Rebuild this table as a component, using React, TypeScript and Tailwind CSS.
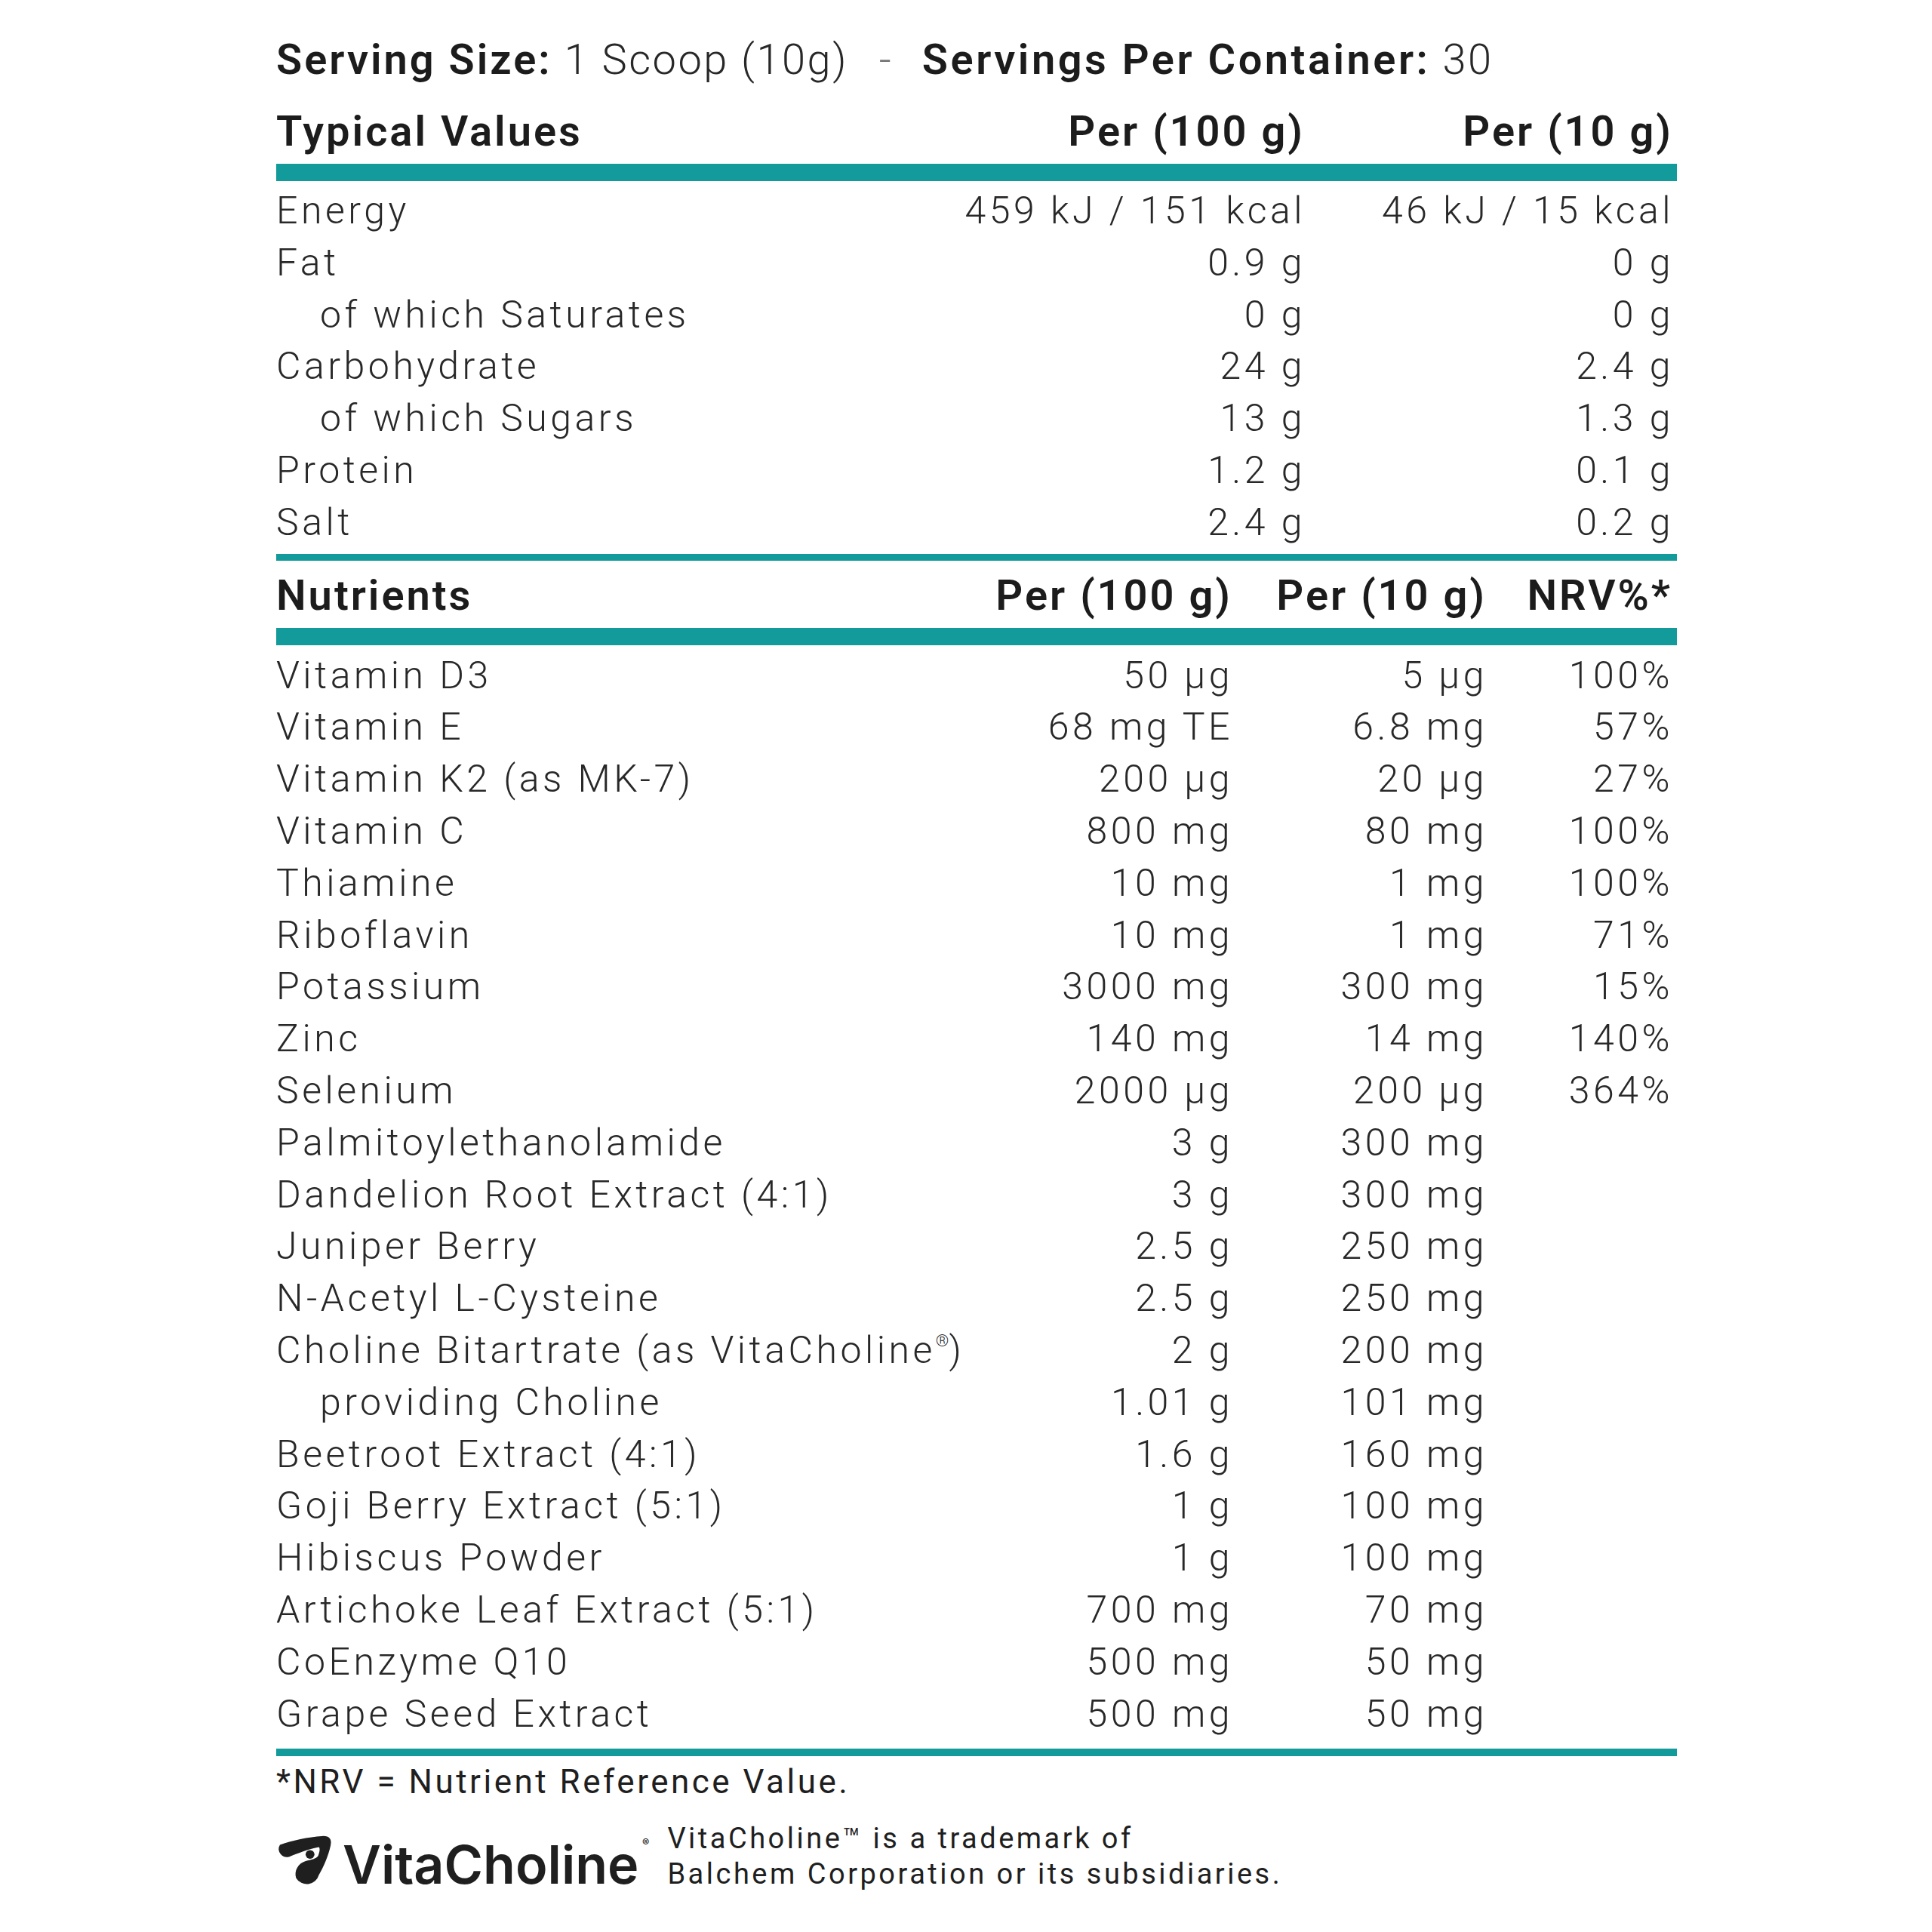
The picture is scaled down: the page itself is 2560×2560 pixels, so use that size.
import React from "react";

type Row = { name: string; a: string; b: string; c?: string; indent?: boolean };

const typical: Row[] = [
  { name: "Energy", a: "459 kJ / 151 kcal", b: "46 kJ / 15 kcal" },
  { name: "Fat", a: "0.9 g", b: "0 g" },
  { name: "of which Saturates", a: "0 g", b: "0 g", indent: true },
  { name: "Carbohydrate", a: "24 g", b: "2.4 g" },
  { name: "of which Sugars", a: "13 g", b: "1.3 g", indent: true },
  { name: "Protein", a: "1.2 g", b: "0.1 g" },
  { name: "Salt", a: "2.4 g", b: "0.2 g" },
];

const nutrients: Row[] = [
  { name: "Vitamin D3", a: "50 µg", b: "5 µg", c: "100%" },
  { name: "Vitamin E", a: "68 mg TE", b: "6.8 mg", c: "57%" },
  { name: "Vitamin K2 (as MK-7)", a: "200 µg", b: "20 µg", c: "27%" },
  { name: "Vitamin C", a: "800 mg", b: "80 mg", c: "100%" },
  { name: "Thiamine", a: "10 mg", b: "1 mg", c: "100%" },
  { name: "Riboflavin", a: "10 mg", b: "1 mg", c: "71%" },
  { name: "Potassium", a: "3000 mg", b: "300 mg", c: "15%" },
  { name: "Zinc", a: "140 mg", b: "14 mg", c: "140%" },
  { name: "Selenium", a: "2000 µg", b: "200 µg", c: "364%" },
  { name: "Palmitoylethanolamide", a: "3 g", b: "300 mg" },
  { name: "Dandelion Root Extract (4:1)", a: "3 g", b: "300 mg" },
  { name: "Juniper Berry", a: "2.5 g", b: "250 mg" },
  { name: "N-Acetyl L-Cysteine", a: "2.5 g", b: "250 mg" },
  { name: "Choline Bitartrate (as VitaCholine", a: "2 g", b: "200 mg" },
  { name: "providing Choline", a: "1.01 g", b: "101 mg", indent: true },
  { name: "Beetroot Extract (4:1)", a: "1.6 g", b: "160 mg" },
  { name: "Goji Berry Extract (5:1)", a: "1 g", b: "100 mg" },
  { name: "Hibiscus Powder", a: "1 g", b: "100 mg" },
  { name: "Artichoke Leaf Extract (5:1)", a: "700 mg", b: "70 mg" },
  { name: "CoEnzyme Q10", a: "500 mg", b: "50 mg" },
  { name: "Grape Seed Extract", a: "500 mg", b: "50 mg" },
];

// VitaCholine hook mark
const LogoMark: React.FC = () => (
  <svg viewBox="0 0 78 74" className="mt-[17px] w-[76px] h-[72px] shrink-0">
    <path
      d="M5 15 C20 9 45 4 62 3 Q77 2 74 16 C71 30 64 46 58 56 A17 17 0 0 1 27 60 C24 50 30 40 40 37 C48 35 54 34 57 30 C59 25 60 20 58 18 C46 20 28 27 18 31 A11 11 0 0 1 5 15 Z"
      fill="#1f1f1f"
    />
    <circle cx="46" cy="28" r="6" fill="#1f1f1f" />
  </svg>
);

const App: React.FC = () => {
  return (
    <div className="w-[2560px] h-[2560px] bg-white font-['Roboto',sans-serif] text-[#282828]">
      <div className="ml-[366px] w-[1856px] pt-[44px]">
        {/* serving line */}
        <div className="h-[70px] leading-[70px] text-[56px] whitespace-nowrap">
          <span className="font-semibold tracking-[3px] text-[#1c1c1c]">Serving Size:</span>
          <span className="font-light tracking-[2.5px]"> 1 Scoop (10g)</span>
          <span className="font-light text-[#777]">&nbsp;&nbsp; - &nbsp;&nbsp;</span>
          <span className="font-semibold tracking-[3.5px] text-[#1c1c1c]">Servings Per Container:</span>
          <span className="font-light tracking-[2.5px]"> 30</span>
        </div>

        {/* typical values */}
        <div className="mt-[25px] grid grid-cols-[minmax(0,1fr)_500px_488px] pr-[5px] h-[70px] leading-[70px] text-[56px] font-semibold tracking-[3px] text-[#1c1c1c] whitespace-nowrap">
          <div>Typical Values</div>
          <div className="text-right">Per (100 g)</div>
          <div className="text-right">Per (10 g)</div>
        </div>
        <div className="mt-[8px] h-[23px] bg-[#139a9a]" />
        <div className="mt-[5px]">
          {typical.map((r) => (
            <div
              key={r.name}
              className="grid grid-cols-[minmax(0,1fr)_500px_488px] pr-[4px] h-[68.8px] leading-[68.8px] text-[50px] font-light tracking-[4.5px] whitespace-nowrap"
            >
              <div className={r.indent ? "pl-[58px]" : ""}>{r.name}</div>
              <div className="text-right">{r.a}</div>
              <div className="text-right">{r.b}</div>
            </div>
          ))}
        </div>
        <div className="mt-[7px] h-[9px] bg-[#139a9a]" />

        {/* nutrients */}
        <div className="mt-[11px] grid grid-cols-[minmax(0,1fr)_400px_337px_246px] pr-[6px] h-[70px] leading-[70px] text-[56px] font-semibold tracking-[3px] text-[#1c1c1c] whitespace-nowrap">
          <div>Nutrients</div>
          <div className="text-right">Per (100 g)</div>
          <div className="text-right">Per (10 g)</div>
          <div className="text-right">NRV%*</div>
        </div>
        <div className="mt-[8px] h-[23px] bg-[#139a9a]" />
        <div className="mt-[6px]">
          {nutrients.map((r) => (
            <div
              key={r.name}
              className="grid grid-cols-[minmax(0,1fr)_400px_337px_246px] pr-[5px] h-[68.8px] leading-[68.8px] text-[50px] font-light tracking-[4.5px] whitespace-nowrap"
            >
              <div className={r.indent ? "pl-[58px]" : ""}>
                {r.name}
                {r.name.endsWith("VitaCholine") && (
                  <>
                    <sup className="text-[22px] -top-[22px] tracking-normal">®</sup>)
                  </>
                )}
              </div>
              <div className="text-right">{r.a}</div>
              <div className="text-right">{r.b}</div>
              <div className="text-right">{r.c ?? ""}</div>
            </div>
          ))}
        </div>
        <div className="mt-[12px] h-[10px] bg-[#139a9a]" />

        {/* footnote */}
        <div className="mt-[6px] h-[56px] leading-[56px] text-[44px] font-normal tracking-[3.5px] text-[#1f1f1f] whitespace-nowrap">
          *NRV = Nutrient Reference Value.
        </div>

        {/* logo + trademark */}
        <div className="mt-[24px] flex items-start gap-[38px]">
          <div className="flex items-start gap-[12px]">
            <LogoMark />
            <div className="relative mt-[18px] text-[70px] leading-[80px] font-['Inter',sans-serif] font-semibold text-[#1f1f1f]">
              VitaCholine
              <span className="absolute -right-[14px] top-[4px] text-[14px] leading-none">®</span>
            </div>
          </div>
          <div className="text-[38px] leading-[47px] tracking-[3.5px] text-[#1f1f1f] whitespace-nowrap">
            <div>VitaCholine™ is a trademark of</div>
            <div>Balchem Corporation or its subsidiaries.</div>
          </div>
        </div>
      </div>
    </div>
  );
};

export default App;
